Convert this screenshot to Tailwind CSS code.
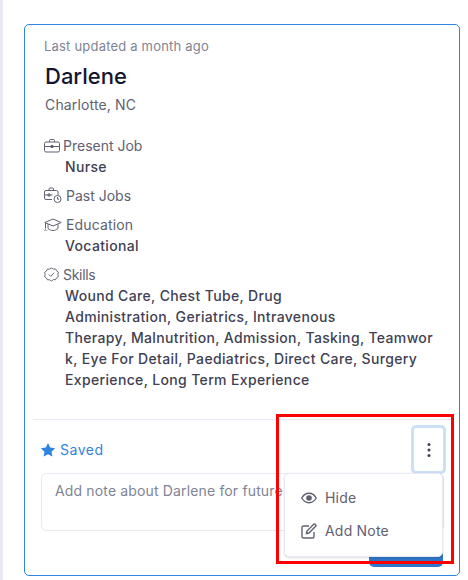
<!DOCTYPE html>
<html lang="en">
  <head>
    <meta charset="UTF-8" />
    <title>Darlene</title>
    <script src="https://cdn.jsdelivr.net/npm/@tailwindcss/browser@4"></script>
  </head>
  <body class="bg-white h-[580px] overflow-hidden font-['Inter','Noto_Sans',sans-serif]">
    <div class="relative h-[580px] w-[468px] overflow-hidden border-l-[3px] border-[#e8e9f3] pl-[21px] pt-6">
      <!-- card -->
      <div class="h-[552px] w-[436px] rounded-[5px] border border-[#2f84e0] bg-white">
        <div class="h-[394px] pl-[19px] pr-3 pt-[13px]">
          <p class="text-[13px] leading-[16px] tracking-[0.2px] text-[#808495]">Last updated a month ago</p>
          <h1 class="mt-[8px] pl-px text-[22px] leading-[29px] font-medium text-[#14152e]">Darlene</h1>
          <p class="mt-[3px] pl-px text-[14px] leading-[21px] tracking-[0.15px] text-[#5f6172]">Charlotte, NC</p>

          <div class="mt-[20px] flex items-center gap-[3px] text-[14px] leading-[21px] text-[#5f6172]">
            <svg class="h-4 w-4" viewBox="0 0 16 16" fill="none" stroke="currentColor" stroke-width="1"><rect x="0.5" y="4" width="15" height="10" rx="1.5"/><path d="M5.5 4V2.5a1 1 0 0 1 1-1h3a1 1 0 0 1 1 1V4M0.5 8.5h15M7 7.5h2v2H7z"/></svg>
            <span>Present Job</span>
          </div>
          <p class="pl-[21px] text-[14px] leading-[21px] font-medium tracking-[0.35px] text-[#3f4152]">Nurse</p>

          <div class="mt-[8px] flex items-center gap-1 text-[14px] leading-[21px] text-[#5f6172]">
            <svg class="h-[17px] w-[18px]" viewBox="0 0 18 17" fill="none" stroke="currentColor" stroke-width="1"><path d="M8 12.5H2a1.5 1.5 0 0 1-1.500-1.500V5A1.500 1.500 0 0 1 2 3.500h10.500A1.500 1.500 0 0 1 14 5v3M5 3.500V2a1 1 0 0 1 1-1h2.500a1 1 0 0 1 1 1v1.500M0.500 8h8M4 7h2v2H4z"/><circle cx="13.500" cy="12" r="3.500"/><path d="M13.500 10v2.200h1.600"/></svg>
            <span>Past Jobs</span>
          </div>

          <div class="mt-[8px] flex items-center gap-1 text-[14px] leading-[21px] tracking-[0.15px] text-[#5f6172]">
            <svg class="h-[16px] w-[18px]" viewBox="0 0 18 16" fill="none" stroke="currentColor" stroke-width="1"><path d="M9 2 0.800 5.500 9 9l8.200-3.500zM4 7.200v4.300c1.500 1.400 3.300 2 5 2s3.500-.6 5-2V7.200M1.500 6v5.500M2.800 13.500c-.5-1-1.700-1-2.400 0"/></svg>
            <span>Education</span>
          </div>
          <p class="pl-[21px] text-[14px] leading-[21px] font-medium tracking-[0.35px] text-[#3f4152]">Vocational</p>

          <div class="mt-[8px] flex items-center gap-1 text-[14px] leading-[21px] text-[#5f6172]">
            <svg class="h-[15px] w-[15px]" viewBox="0 0 16 16" fill="none" stroke="currentColor" stroke-width="1"><path d="M8 1l2 1.200 2.300-.1 1.100 2 1.900 1.300-.5 2.400.5 2.300-1.900 1.400-1.100 2-2.300-.1L8 15l-2-1.400-2.300.1-1.100-2L.7 10.300l.5-2.300-.5-2.400 1.900-1.300 1.100-2L6 2.200z"/><path d="M5.200 8l2 2 3.600-3.800"/></svg>
            <span class="tracking-[-0.3px]">Skills</span>
          </div>
          <p class="pl-[21px] text-[14px] leading-[21px] font-medium tracking-[0.35px] whitespace-nowrap text-[#3f4152]">
            Wound Care, Chest Tube, Drug<br />
            Administration, Geriatrics, Intravenous<br />
            Therapy, Malnutrition, Admission, Tasking, Teamwor<br />
            k, Eye For Detail, Paediatrics, Direct Care, Surgery<br />
            Experience, Long Term Experience
          </p>
        </div>

        <div class="mx-[8px] h-px bg-[#e8e9f3]"></div>

        <div class="flex items-center justify-between pl-[15px] pr-[13px] pt-[5px]">
          <div class="flex items-center gap-[4px] text-[14px] leading-[21px] tracking-[0.5px] text-[#2f84e0]">
            <svg class="h-[16px] w-[16px]" viewBox="0 0 24 24" fill="currentColor"><path d="M12 1.500l3.300 6.800 7.400 1-5.400 5.200 1.300 7.400L12 18.400l-6.600 3.500 1.300-7.400L1.300 9.300l7.400-1z"/></svg>
            <span>Saved</span>
          </div>
          <button class="flex h-[49px] w-[35px] items-center justify-center rounded-[5px] border-[3px] border-[#c9e0f7] bg-white">
            <svg class="h-[16px] w-[4px]" viewBox="0 0 4 16" fill="#3f4152"><circle cx="2" cy="2.500" r="1.500"/><circle cx="2" cy="8" r="1.500"/><circle cx="2" cy="13.500" r="1.500"/></svg>
          </button>
        </div>

        <div class="ml-4 mr-[15px] -mt-[1px] h-[58px] overflow-hidden rounded-[5px] border border-[#e8e9f3] pl-[13px] pt-[6px] text-[14px] leading-[21px] tracking-[0.15px] whitespace-nowrap text-[#808495]">Add note about Darlene for future</div>
      </div>

      <!-- blue button behind menu -->
      <div class="absolute left-[366px] top-[553px] h-[14px] w-[74px] rounded-b-[5px] bg-[#2f77c9]"></div>

      <!-- dropdown -->
      <div class="absolute left-[281px] top-[473px] h-[84px] w-[159px] rounded-[5px] border border-[#e8e9f3] bg-white pl-4 pt-[7px] shadow-sm">
        <div class="flex h-[33px] items-center gap-2 text-[14px] tracking-[0.2px] text-[#5f6172]">
          <svg class="h-[16px] w-[16px]" viewBox="0 0 16 16" fill="none"><path d="M0.800 8C2.500 5 5 3.300 8 3.300S13.500 5 15.200 8C13.500 11 11 12.700 8 12.700S2.500 11 .8 8z" stroke="#5f6172" stroke-width="1.400"/><circle cx="8" cy="8" r="2.800" fill="#5f6172"/></svg>
          <span>Hide</span>
        </div>
        <div class="flex h-[33px] items-center gap-2 text-[14px] tracking-[0.2px] text-[#5f6172]">
          <svg class="h-[16px] w-[16px]" viewBox="0 0 16 16" fill="none" stroke="#5f6172" stroke-width="1.400"><path d="M13 9v4.500a1.500 1.500 0 0 1-1.500 1.500h-9A1.500 1.500 0 0 1 1 13.500v-9A1.500 1.500 0 0 1 2.500 3H8"/><path d="M5.500 10.500l.5-2.500L12.700 1.300a1 1 0 0 1 1.400 0l.6.600a1 1 0 0 1 0 1.400L8 10z"/></svg>
          <span>Add Note</span>
        </div>
      </div>

      <!-- red highlight -->
      <div class="pointer-events-none absolute left-[273px] top-[414px] h-[150px] w-[178px] border-[3px] border-[#ff0000]"></div>
    </div>
  </body>
</html>
